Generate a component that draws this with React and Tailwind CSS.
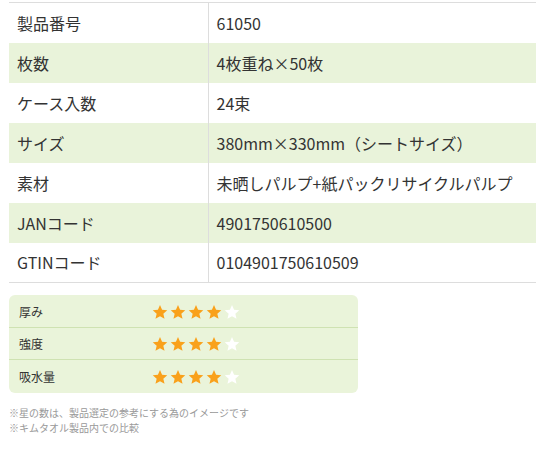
import React from 'react';

const SPECS = [
  ['製品番号', '61050'],
  ['枚数', '4枚重ね×50枚'],
  ['ケース入数', '24束'],
  ['サイズ', '380mm×330mm（シートサイズ）'],
  ['素材', '未晒しパルプ+紙パックリサイクルパルプ'],
  ['JANコード', '4901750610500'],
  ['GTINコード', '0104901750610509'],
];

const RATINGS = [
  ['厚み', 4],
  ['強度', 4],
  ['吸水量', 4],
];

function Star({ on }) {
  return (
    <svg width="16" height="16" viewBox="0 0 24 24" className="block">
      <path
        d="M12 1.5l3.1 7.2 7.8.7-5.9 5.2 1.8 7.7L12 18.2l-6.8 4.1 1.8-7.7-5.9-5.2 7.8-.7z"
        fill={on ? '#f9a11b' : '#ffffff'}
      />
    </svg>
  );
}

export default function App() {
  return (
    <div className="w-[540px] h-[450px] bg-white pl-[9px] pt-[2px] text-[#333] font-['Noto_Sans_CJK_JP','Noto_Sans',sans-serif]">
      {/* spec table */}
      <table className="w-[527px] border-collapse border-y border-[#dddddd] text-[16px]">
        <tbody>
          {SPECS.map(([k, v], i) => (
            <tr key={k} className={i % 2 ? 'bg-[#e9f3da]' : 'bg-white'}>
              <td className="h-[40px] w-[199px] border-r border-[#dddddd] pl-[8px] leading-none">{k}</td>
              <td className="h-[40px] pl-[8px] leading-none">{v}</td>
            </tr>
          ))}
        </tbody>
      </table>

      {/* rating box */}
      <div className="mt-[12px] w-[349px] rounded-[6px] bg-[#eaf4da] divide-y divide-[#cfe2b2]">
        {RATINGS.map(([label, n]) => (
          <div key={label} className="flex h-[32.5px] items-center pt-[2px]">
            <span className="w-[143px] pl-[10px] text-[12px]">{label}</span>
            <div className="flex gap-[2px]">
              {[0, 1, 2, 3, 4].map(i => <Star key={i} on={i < n} />)}
            </div>
          </div>
        ))}
      </div>

      <div className="mt-[12px] text-[10px] leading-[15px] text-[#999999]">
        <p>※星の数は、製品選定の参考にする為のイメージです</p>
        <p>※キムタオル製品内での比較</p>
      </div>
    </div>
  );
}
